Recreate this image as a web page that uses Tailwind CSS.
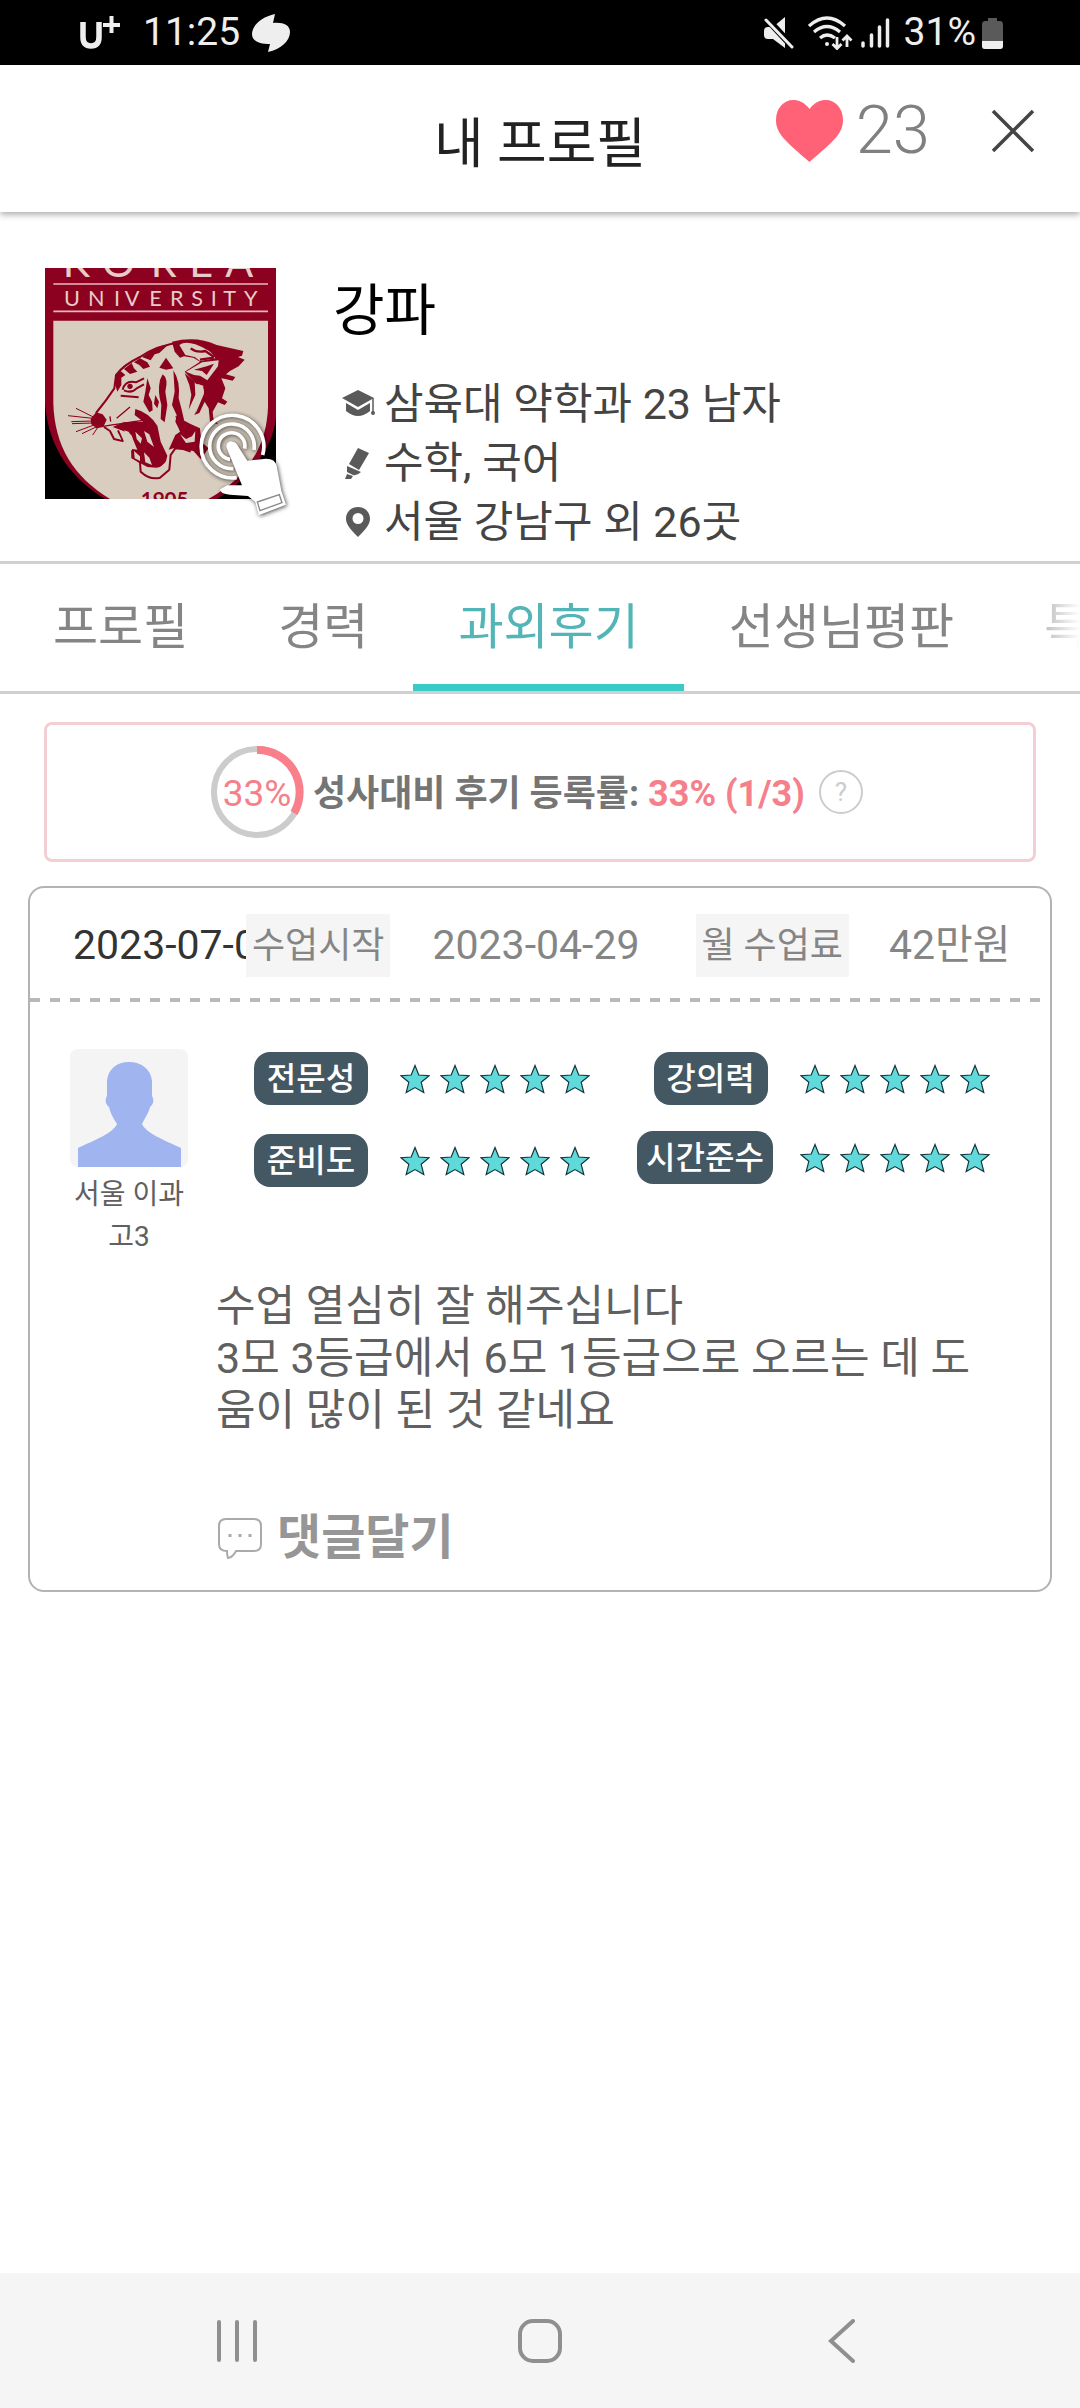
<!DOCTYPE html>
<html lang="ko">

<head>
    <meta charset="UTF-8">
    <meta name="viewport" content="width=device-width, initial-scale=1.0">
    <title>내 프로필</title>
    <script src="https://cdn.jsdelivr.net/npm/@tailwindcss/browser@4"></script>
</head>

<body class="flex min-h-screen flex-col bg-white font-[Roboto,'Noto_Sans_CJK_KR',sans-serif] text-[#444]">
    <!-- shared star row -->
    <svg class="hidden">
        <symbol id="star" viewBox="0 0 30 30">
            <path d="M15 1.5 18.8 11 29 11.7 21.2 18.3 23.8 28.5 15 23.6 6.2 28.5 8.8 18.3 1 11.7 11.2 11Z"
                fill="#5fd9da" stroke="#16343a" stroke-width="1.2" />
        </symbol>
        <symbol id="stars" viewBox="0 0 190 30">
            <use href="#star" x="0" width="30" height="30" />
            <use href="#star" x="40" width="30" height="30" />
            <use href="#star" x="80" width="30" height="30" />
            <use href="#star" x="120" width="30" height="30" />
            <use href="#star" x="160" width="30" height="30" />
        </symbol>
    </svg>

    <!-- status bar -->
    <div class="flex h-[65px] items-center justify-between bg-black pr-[77px] pl-[79px] text-[39px] leading-none text-[#eee]">
        <div class="flex items-center">
            <svg class="h-[36px] w-[42px]" viewBox="0 0 42 36" fill="none" stroke="#eee">
                <path d="M4 7V22Q4 31 12 31T20 22V7" stroke-width="5.5" />
                <path d="M24 10H41M32.5 1V18" stroke-width="4" />
            </svg>
            <span class="ml-[22px]">11:25</span>
            <svg class="ml-[11px] h-[38px] w-[40px]" viewBox="0 0 40 38" fill="#eee">
                <path d="M24 0C10 3 1 12 1 20c0 7 7 10 18 10l-2 8c13-3 22-11 22-20 0-7-7-10-17-9Z" />
            </svg>
        </div>
        <div class="flex items-center">
            <svg class="h-[32px] w-[30px]" viewBox="0 0 30 32">
                <path d="M0 14q0-4 4-4h5L21 0V31L9 22H4q-4 0-4-4Z" fill="#eee" />
                <path d="M1 0 30 31" stroke="#000" stroke-width="7" />
                <path d="M2 3 28 30" stroke="#eee" stroke-width="3" stroke-linecap="round" />
            </svg>
            <svg class="ml-[14px] h-[34px] w-[45px]" viewBox="0 0 45 34" fill="none" stroke="#eee" stroke-width="3.2">
                <path d="M1 10Q19-6 37 10M6 16Q19 5 32 16M12 22Q19 16 27 22" />
                <circle cx="19" cy="28" r="2" fill="#eee" stroke="none" />
                <path d="M29 21V32M24.5 28l4.5 4.5 4.5-4.5M39 31V20M34.5 24.500l4.500-4.500 4.500 4.500" stroke-width="2.8" />
            </svg>
            <svg class="ml-2 h-[30px] w-[29px]" viewBox="0 0 29 30" stroke="#eee" stroke-width="3.5" stroke-linecap="round">
                <path d="M2 25V28M10.500 17V28M18.500 9V28M26.500 2V28" />
            </svg>
            <span class="ml-[14px]">31%</span>
            <svg class="ml-[6px] h-[32px] w-[21px]" viewBox="0 0 21 32">
                <path d="M6 1h9v3h3q3 0 3 4v21q0 3-3 3H3q-3 0-3-3V8q0-4 3-4h3Z" fill="#5a5a5a" />
                <path d="M0 24h21v5q0 3-3 3H3q-3 0-3-3Z" fill="#eee" />
            </svg>
        </div>
    </div>

    <header class="grid h-[147px] grid-cols-[1fr_auto_1fr] items-center bg-white pb-4 shadow-[0_3px_6px_rgba(0,0,0,0.3)]">
        <h1 class="col-start-2 pt-7 text-[54px] leading-none text-[#222]">내 프로필</h1>
        <div class="flex items-center justify-end pr-[45px]">
            <svg class="h-[62px] w-[67px]" viewBox="0 0 67 62">
                <path d="M33.5 9C28 2 23 0 17 0 8 0 0 8 0 20 0 33 8 40 33.5 62 59 40 67 33 67 20 67 8 59 0 50 0 44 0 39 2 33.5 9Z" fill="#ff6176" />
            </svg>
            <span class="ml-[13px] text-[67px] leading-none font-light text-[#808080]">23</span>
            <button type="button" aria-label="닫기" class="ml-[61px]">
                <svg class="h-[44px] w-[44px]" viewBox="0 0 44 44" stroke="#444" stroke-width="3.5">
                    <path d="M2 2 42 42M42 2 2 42" />
                </svg>
            </button>
        </div>
    </header>

    <section class="flex h-[349px] pt-[56px] pl-[45px]">
        <div class="relative size-[231px] shrink-0">
            <svg class="size-full" viewBox="45 54 693 693">
                <rect x="45" y="54" width="693" height="693" fill="#000" />
                <path d="M45 54H738V500C730 600 650 690 560 747H225C130 690 55 600 45 460Z" fill="#8c0020" />
                <path d="M70 212H714V470C710 600 640 690 535 747H240C130 680 74 590 70 460Z" fill="#d8cdbf" />
                <path d="M70 102H714M70 184H714" stroke="#e6b9bd" stroke-width="5" />
                <g fill="#e6cdc9" font-family="Lato">
                    <text x="98 216 362 478 586" y="82" font-size="124">KOREA</text>
                    <text x="102 174 252 284 358 420 484 542 580 642" y="168" font-size="65">UNIVERSITY</text>
                </g>
                <text x="332" y="772" font-family="Lato" font-size="62" font-weight="bold" fill="#8c0020">1905</text>
                <!-- tiger face -->
                <g transform="translate(90 225)">
                    <g fill="#8c0020">
                        <path d="M92 282 108 262 128 268 140 284 130 306 110 310 94 298Z" />
                        <path d="M166 150 182 138 196 150 184 158 184 180 172 200 166 180Z" />
                        <path d="M192 132 215 114 222 130 232 140 210 147Z" />
                        <path d="M222 112 240 100 262 112 270 125 250 132 238 120Z" />
                        <path d="M246 96 285 70 305 62 326 58 298 84 284 88 272 106Z" />
                        <path d="M318 98 340 130 318 134 298 128Z" />
                        <path d="M308 148Q326 160 316 200L322 240 314 292 302 282 304 240Q292 200 300 165Z" />
                        <path d="M340 136Q362 170 356 220L364 250 372 284 360 318 346 290 350 270 336 240 344 200Z" />
                        <path d="M262 160 272 190 266 210 276 230 278 256 268 262 250 230 256 200Z" />
                        <path d="M286 210 297 230 292 250 282 236Z" />
                        <path d="M226 252Q266 262 292 302L302 350 322 392Q318 424 290 428L262 426 236 412 214 400 216 372 232 374 222 350 214 330 190 318 158 306 190 292 250 290 224 270Z" />
                        <circle cx="210" cy="184" r="8" />
                    </g>
                    <g fill="none" stroke="#8c0020" stroke-width="6" stroke-linejoin="round">
                        <path d="M108 264Q140 225 163 190L168 150Q190 120 240 96 290 62 360 52" />
                        <path d="M188 194Q196 164 228 172L252 160M192 196Q215 206 230 190L252 178M182 212 236 217" />
                        <path d="M130 304Q180 296 250 286M150 274 152 290M170 280 210 246" stroke-width="4" />
                        <path d="M132 306 150 318 162 342 188 348 174 316" />
                        <path d="M216 376 218 396 240 412 242 440Q270 466 300 458L328 434 332 390 346 370Q370 370 392 380" />
                        <path d="M100 276 48 250M98 280 24 272M98 288 34 290M98 294 36 296M102 300 48 320M108 306 66 326M114 306 98 330" stroke-width="3" />
                    </g>
                    <g fill="#d8cdbf">
                        <path d="M160 320 176 328 184 344 166 338ZM192 316 206 320 218 340 202 336ZM226 320 246 340 242 356 230 342ZM252 318 268 328 282 366 262 350ZM222 378 240 394 240 408 224 400ZM252 382 268 398 276 420 256 412Z" />
                        <path d="M248 420Q286 446 314 414L316 428 296 446 262 446 250 436Z" />
                    </g>
                </g>
                <!-- ear, mane and neck -->
                <g transform="translate(360 225)">
                    <g fill="#8c0020">
                        <path d="M66 50Q140 32 200 60L280 78 276 92 264 96 284 104 266 124 240 138 228 148 256 156 248 167 226 162 214 160 226 190 216 220 232 230 224 240 204 232 188 260 190 280 204 298 180 290 176 250 164 230 148 264 133 270 146 240 158 210 160 182 138 176 104 140 150 110 130 98 102 94 90 98 74 80Z" />
                        <path d="M104 144 134 170 136 210 116 254 124 210 118 180Z" />
                        <path d="M76 272 120 296 150 310 154 350 176 370 152 402 130 378 70 370 56 374 76 330 90 320Z" />
                    </g>
                    <g fill="#d8cdbf">
                        <path d="M88 60Q104 48 136 58 186 76 196 100L150 108 134 96 106 90Z" />
                        <path d="M108 140 156 112 206 106 204 124 172 166 150 152 132 150Z" />
                        <path d="M144 178Q164 180 162 206L136 268 146 216Z" />
                        <path d="M90 328 108 342 126 334 136 318 134 350 108 354Z" />
                    </g>
                    <path d="M132 134 170 124 192 116 170 150 156 138Z" fill="#8c0020" />
                    <path d="M122 70Q140 84 166 78L192 96M150 104 192 98" fill="none" stroke="#8c0020" stroke-width="7" />
                </g>
            </svg>
            <!-- tap hint -->
            <svg class="absolute top-[140px] left-[150px] h-[114px] w-[98px] drop-shadow-[1px_1px_2px_rgba(0,0,0,0.7)]" viewBox="495 474 294 342">
                <g fill="none" stroke="#fff" stroke-width="11">
                    <path d="M620 683A94 94 0 1 1 698 615" />
                    <path d="M610 656A67 67 0 1 1 672 600" />
                    <path d="M600 628A40 40 0 1 1 644 596" />
                </g>
                <path d="M590 594Q586 576 604 574 620 576 626 592L652 632 708 626Q736 626 740 648L754 722 768 764 686 796 676 756 654 738 600 734Q570 732 570 718L592 706 636 706Z" fill="#fff" />
                <path d="M682 756 748 734 756 758 690 782Z" fill="none" stroke="#888" stroke-width="4" />
            </svg>
        </div>
        <div class="pl-[57px]">
            <h2 class="pt-[14px] text-[56px] leading-[58px] text-black">강파</h2>
            <ul class="pt-[35px] pl-2 text-[43px] leading-[59px]">
                <li class="flex items-center gap-[9px]">
                    <svg class="h-[32px] w-[34px]" viewBox="0 0 34 32" fill="#5a5a5a">
                        <path d="M17 1 33 9 17 18 1 9ZM5 14 17 21 29 14V22Q17 32 5 22Z" />
                        <path d="M32 9V25" stroke="#5a5a5a" stroke-width="1.5" />
                        <circle cx="32" cy="24" r="2" />
                    </svg>
                    삼육대 약학과 23 남자
                </li>
                <li class="flex items-center gap-[9px]">
                    <svg class="h-[32px] w-[34px]" viewBox="0 0 34 32" fill="#5a5a5a">
                        <path d="M17 0 28 5 18 22 8 16ZM6 18 20 24Q16 28 12 27L6 24ZM6 26 12 28 10 31 4 31Z" />
                    </svg>
                    수학, 국어
                </li>
                <li class="flex items-center gap-[9px]">
                    <svg class="h-[32px] w-[34px]" viewBox="0 0 34 32" fill="#5a5a5a" fill-rule="evenodd">
                        <path d="M17 0C10 0 5 5 5 12 5 18 11 24 17 30 23 24 29 18 29 12 29 5 24 0 17 0ZM17 6a5 5 0 1 1 0 11 5 5 0 0 1 0-11Z" />
                    </svg>
                    서울 강남구 외 26곳
                </li>
            </ul>
        </div>
    </section>

    <nav class="relative border-y-3 border-[#d0d0d0]">
        <div role="tablist" class="flex h-[127px] overflow-hidden pl-[8px] text-[49px] leading-none whitespace-nowrap text-[#858585]">
            <button type="button" role="tab" class="px-[45px]">프로필</button>
            <button type="button" role="tab" class="px-[45px]">경력</button>
            <button type="button" role="tab" aria-selected="true" class="border-b-7 border-[#39caca] px-[45px] pt-[7px] text-[#53b5b7]">과외후기</button>
            <button type="button" role="tab" class="px-[45px]">선생님평판</button>
            <button type="button" role="tab" class="px-[45px]">특</button>
        </div>
        <div class="absolute inset-y-0 right-0 w-[54px] bg-linear-to-r from-white/20 to-white"></div>
    </nav>

    <main class="flex-1 px-[28px] pt-[28px]">
        <div class="mx-4 flex h-[140px] items-center rounded-lg border-3 border-[#f3cfd5] pl-[163px] text-[36px] leading-none whitespace-nowrap text-[#f5808a]">
            <div class="relative flex size-[94px] items-center justify-center">
                <svg class="absolute inset-0 size-full" viewBox="0 0 94 94" fill="none">
                    <circle cx="47" cy="47" r="43" stroke="#ccc" stroke-width="6" />
                    <path d="M47 5A42 42 0 0 1 84 68" stroke="#f9808b" stroke-width="8" />
                </svg>
                <span class="relative pt-[3px] text-[37px]">33%</span>
            </div>
            <p class="ml-[9px] pt-[3px] font-bold"><span class="text-[#757575]">성사대비 후기 등록률:</span> 33% (1/3)</p>
            <button type="button" aria-label="도움말" class="ml-[14px] size-[44px] rounded-full border-2 border-[#ccc] text-[26px] text-[#ccc]">?</button>
        </div>

        <article class="mt-[24px] rounded-2xl border-2 border-[#b3b3b3]">
            <div class="flex h-[110px] items-center pt-1 pl-[43px] text-[41px] leading-none whitespace-nowrap text-[#858585]">
                <time class="w-[173px] overflow-hidden text-[#333]">2023-07-01</time>
                <span class="bg-[#f5f5f5] px-[6px] pt-[2px] text-[36px] leading-[61px]">수업시작</span>
                <time class="ml-[42px]">2023-04-29</time>
                <span class="ml-[56px] bg-[#f5f5f5] px-[6px] pt-[2px] text-[36px] leading-[61px]">월 수업료</span>
                <span class="ml-[40px]">42만원</span>
            </div>
            <div class="h-[4px] bg-[repeating-linear-gradient(90deg,#b8b8b8_0_10px,transparent_10px_20px)]"></div>

            <div class="flex items-start pt-[47px] pl-[40px]">
                <div class="flex w-[118px] flex-col items-center">
                    <svg class="size-[118px]" viewBox="0 0 118 118">
                        <rect width="118" height="118" rx="8" fill="#f4f4f4" />
                        <path d="M8 118V99C25 91 43 84 47 75 43 69 40 63 39 58 35 55 35 50 37 47V32C38 20 47 13 59 13S81 20 82 32V47C84 50 84 55 80 58 79 63 75 69 72 75 76 84 94 91 111 99V118Z" fill="#a0b5ef" />
                    </svg>
                    <p class="pt-[7px] text-center text-[28px] leading-[42px] text-[#606060]">서울 이과<br>고3</p>
                </div>

                <dl class="ml-[66px] grid grid-cols-[114px_190px] items-center gap-x-[32px] gap-y-[29px] pt-[3px]">
                    <dt class="rounded-2xl bg-[#435862] pt-[2px] text-center text-[32px] leading-[51px] font-medium text-white">전문성</dt>
                    <dd><svg class="h-[30px] w-[190px]" role="img" aria-label="5점"><use href="#stars" /></svg></dd>
                    <dt class="rounded-2xl bg-[#435862] pt-[2px] text-center text-[32px] leading-[51px] font-medium text-white">준비도</dt>
                    <dd><svg class="h-[30px] w-[190px]" role="img" aria-label="5점"><use href="#stars" /></svg></dd>
                </dl>
                <dl class="ml-[47px] grid grid-cols-[136px_190px] items-center justify-items-center gap-x-[27px] gap-y-[26px] pt-[3px]">
                    <dt class="ml-[11px] w-[114px] rounded-2xl bg-[#435862] pt-[2px] text-center text-[32px] leading-[51px] font-medium text-white">강의력</dt>
                    <dd><svg class="h-[30px] w-[190px]" role="img" aria-label="5점"><use href="#stars" /></svg></dd>
                    <dt class="w-full rounded-2xl bg-[#435862] pt-[2px] text-center text-[32px] leading-[51px] font-medium text-white">시간준수</dt>
                    <dd><svg class="h-[30px] w-[190px]" role="img" aria-label="5점"><use href="#stars" /></svg></dd>
                </dl>
            </div>

            <div class="pt-[22px] pr-[60px] pb-[22px] pl-[186px]">
                <p class="text-[43px] leading-[52px] break-all text-[#606060]">수업 열심히 잘 해주십니다<br>3모 3등급에서 6모 1등급으로 오르는 데 도움이 많이 된 것 같네요</p>
                <button type="button" class="mt-[72px] flex items-center gap-[13px] text-[48px] leading-[60px] font-bold text-[#969696]">
                    <svg class="h-[42px] w-[48px]" viewBox="0 0 46 42" fill="none" stroke="#aaa" stroke-width="2">
                        <path d="M9 2H37Q44 2 44 9V27Q44 34 37 34H19Q16 40 11 41 10 39 10 34 2 34 2 27V9Q2 2 9 2Z" />
                        <path d="M13 17v3M23 17v3M33 17v3" stroke-width="3" />
                    </svg>
                    댓글달기
                </button>
            </div>
        </article>
    </main>

    <!-- system navigation -->
    <footer class="grid h-[135px] grid-cols-3 items-center bg-[#f5f5f5] px-[86px]">
        <button type="button" aria-label="최근 앱" class="justify-self-center">
            <svg class="size-[44px]" viewBox="0 0 44 44" stroke="#8f8f8f" stroke-width="4" stroke-linecap="round">
                <path d="M4 3V41M22 3V41M40 3V41" />
            </svg>
        </button>
        <button type="button" aria-label="홈" class="justify-self-center">
            <svg class="size-[44px]" viewBox="0 0 44 44" fill="none" stroke="#8f8f8f" stroke-width="4">
                <rect x="2" y="2" width="40" height="40" rx="13" />
            </svg>
        </button>
        <button type="button" aria-label="뒤로" class="justify-self-center">
            <svg class="size-[44px]" viewBox="0 0 44 44" fill="none" stroke="#8f8f8f" stroke-width="4" stroke-linecap="round">
                <path d="M32 2 10 22 32 42" />
            </svg>
        </button>
    </footer>
</body>

</html>
